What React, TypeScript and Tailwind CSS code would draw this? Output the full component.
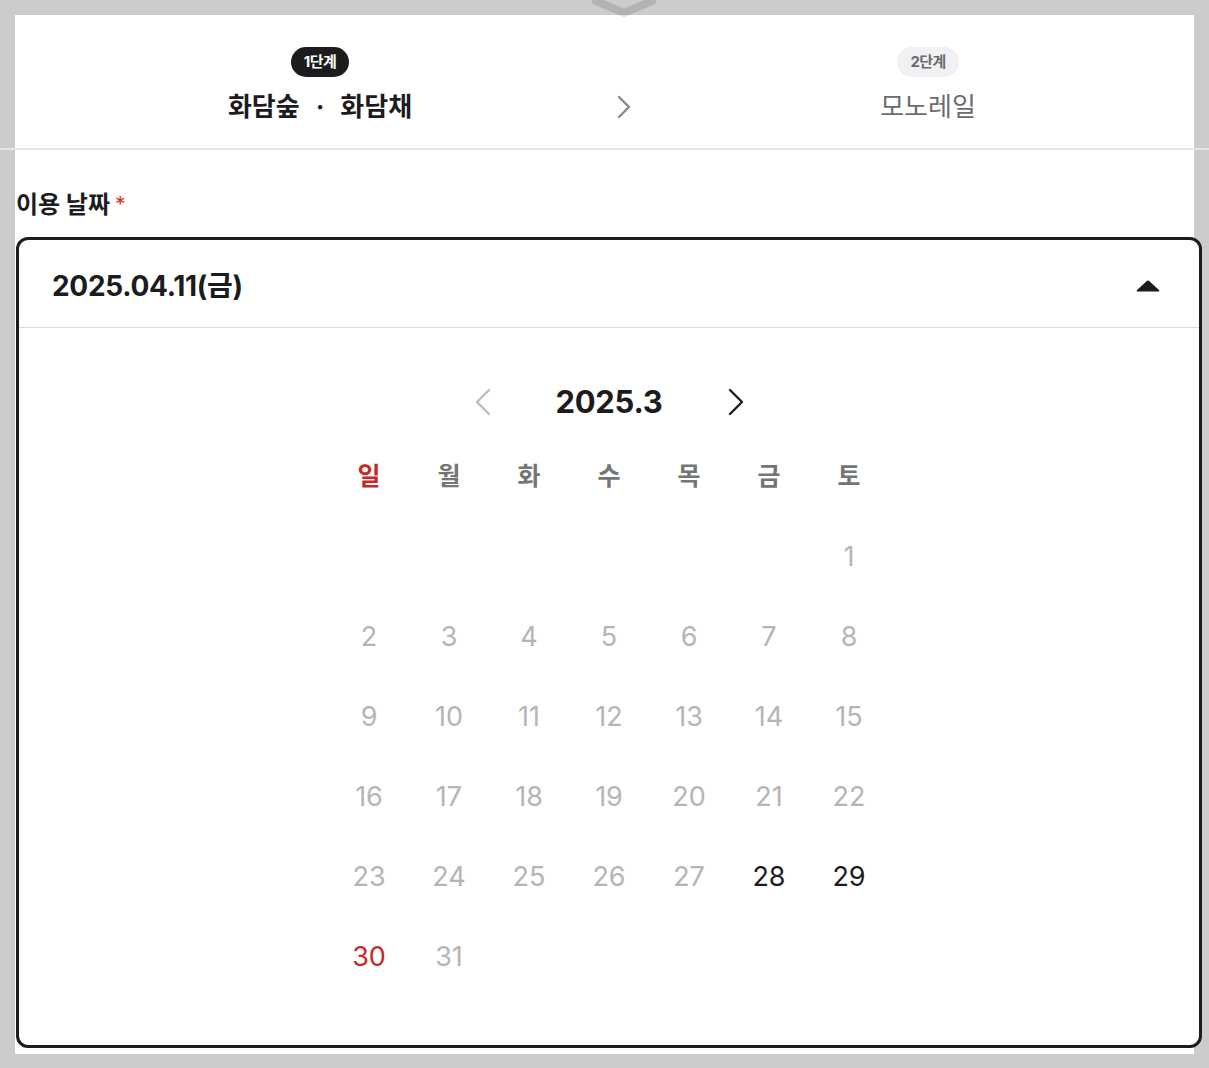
import React from "react";

const FONT = "font-['Inter','Noto_Sans_CJK_KR',sans-serif]";

type Day = { d: number; tone: "muted" | "dark" | "red" } | null;

const rows: Day[][] = (() => {
  const cells: Day[] = [];
  for (let i = 0; i < 6; i++) cells.push(null);
  for (let d = 1; d <= 31; d++) {
    let tone: "muted" | "dark" | "red" = "muted";
    if (d === 28 || d === 29) tone = "dark";
    if (d === 30) tone = "red";
    cells.push({ d, tone });
  }
  while (cells.length % 7 !== 0) cells.push(null);
  const out: Day[][] = [];
  for (let i = 0; i < cells.length; i += 7) out.push(cells.slice(i, i + 7));
  return out;
})();

const weekdays = ["일", "월", "화", "수", "목", "금", "토"];

function Chevron({ dir, color, w = 14, h = 24, sw = 2.4 }: { dir: "l" | "r"; color: string; w?: number; h?: number; sw?: number }) {
  const pts = dir === "r" ? `2,2 ${w - 2},${h / 2} 2,${h - 2}` : `${w - 2},2 2,${h / 2} ${w - 2},${h - 2}`;
  return (
    <svg width={w} height={h} viewBox={`0 0 ${w} ${h}`} fill="none">
      <polyline points={pts} stroke={color} strokeWidth={sw} strokeLinecap="round" strokeLinejoin="round" />
    </svg>
  );
}

export default function App() {
  return (
    <div className={`relative min-h-[1068px] w-[1209px] overflow-hidden bg-[#cccccc] ${FONT}`}>
      {/* top handle */}
      <svg className="absolute left-[588px] top-0" width="72" height="24" viewBox="0 0 72 24" fill="none">
        <polyline points="8,1 36,13 64,1" stroke="rgba(0,0,30,0.12)" strokeWidth="8" strokeLinecap="round" strokeLinejoin="round" />
      </svg>

      <div className="pt-[15px]">
        {/* step header */}
        <div className="mx-[15px] h-[133px] overflow-hidden bg-white">
          <div className="flex pt-[32px] pl-[9px]">
            <div className="flex w-[592px] shrink-0 flex-col items-center">
              <span className="flex h-[30px] items-center rounded-full bg-[#1c1c1e] px-[13px] text-[15px] font-bold tracking-[-0.6px] text-white">
                1단계
              </span>
              <span className="mt-[13px] flex items-center text-[26px] font-bold leading-[34px] text-[#1c1c1e]">
                <span>화담숲</span>
                <span className="mx-[16px]">·</span>
                <span>화담채</span>
              </span>
            </div>
            <div className="flex w-[16px] shrink-0 items-center justify-center pt-[43px]">
              <Chevron dir="r" color="#8a8a8e" w={14} h={24} sw={2.4} />
            </div>
            <div className="flex w-[592px] shrink-0 flex-col items-center">
              <span className="flex h-[30px] items-center rounded-full bg-[#f1f1f4] px-[13px] text-[15px] font-bold tracking-[-0.6px] text-[#6b6b70]">
                2단계
              </span>
              <span className="mt-[13px] text-[26px] font-normal leading-[34px] text-[#6b6b70]">모노레일</span>
            </div>
          </div>
        </div>

        <div className="h-[2px] w-full bg-[#e6e6ea]" />

        {/* body */}
        <div className="mx-[15px] bg-white pt-[41px] pb-[6px]">
          <div className="flex items-center text-[24px] font-bold leading-[28px] text-[#1c1c1e]">
            <span className="pl-[1px]">이용 날짜</span>
            <span className="ml-[5px] text-[21px] font-normal text-[#d32f2f]">*</span>
          </div>

          <div className="ml-[1px] mt-[18px] w-[1186px] rounded-[12px] border-[3px] border-[#1c1c1e] bg-white">
            <div className="flex h-[88px] items-center justify-between border-b border-[#d9d9de] pl-[33px] pr-[39px] pt-[4px]">
              <span className="text-[28px] font-bold tracking-[-0.3px] text-[#1c1c1e]">2025.04.11(금)</span>
              <svg width="24" height="12" viewBox="0 0 24 12" fill="none">
                <path d="M10.6 1.2 Q12 0 13.4 1.2 L23 10 Q24 11.5 22 11.5 L2 11.5 Q0 11.5 1 10 Z" fill="#1c1c1e" />
              </svg>
            </div>

            <div className="flex flex-col items-center pt-[54px] pb-[48px]">
              <div className="grid grid-cols-[24px_229px_24px] items-center">
                <div className="flex justify-center">
                  <Chevron dir="l" color="#bdbdbd" w={16} h={28} sw={2.4} />
                </div>
                <div className="text-center text-[31px] font-bold leading-[40px] tracking-[-0.3px] text-[#1c1c1e]">2025.3</div>
                <div className="flex justify-center">
                  <Chevron dir="r" color="#1c1c1e" w={16} h={28} sw={2.4} />
                </div>
              </div>

              <div className="mt-[15px] grid w-[560px] grid-cols-7">
                {weekdays.map((w, i) => (
                  <div
                    key={w}
                    className={`flex h-[80px] items-center justify-center text-[25px] font-bold ${i === 0 ? "text-[#c62828]" : "text-[#757575]"}`}
                  >
                    {w}
                  </div>
                ))}
                {rows.flat().map((c, i) => (
                  <div
                    key={i}
                    className={`flex h-[80px] items-center justify-center text-[27px] font-normal ${
                      c == null
                        ? ""
                        : c.tone === "dark"
                        ? "text-[#1c1c1e]"
                        : c.tone === "red"
                        ? "text-[#c62828]"
                        : "text-[#b5b5b5]"
                    }`}
                  >
                    {c ? c.d : ""}
                  </div>
                ))}
              </div>
            </div>
          </div>
        </div>
      </div>
    </div>
  );
}
